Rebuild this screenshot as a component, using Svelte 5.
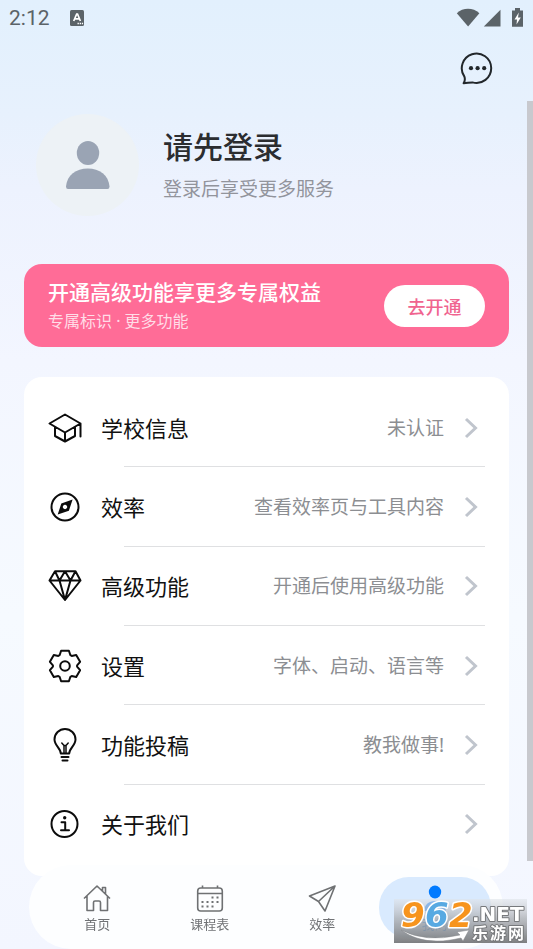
<script>
  const rows = [
    { icon: 'school', label: '学校信息', value: '未认证' },
    { icon: 'compass', label: '效率', value: '查看效率页与工具内容' },
    { icon: 'diamond', label: '高级功能', value: '开通后使用高级功能' },
    { icon: 'gear', label: '设置', value: '字体、启动、语言等' },
    { icon: 'bulb', label: '功能投稿', value: '教我做事!' },
    { icon: 'info', label: '关于我们', value: '' }
  ];

  const tabs = [
    { icon: 'home', label: '首页', active: false },
    { icon: 'calendar', label: '课程表', active: false },
    { icon: 'plane', label: '效率', active: false },
    { icon: 'me', label: '我的', active: true }
  ];

  // Outline of the settings gear: one tooth, turned six times round the centre.
  const tooth = [[-5.4, -10.8], [-3.9, -15.2], [3.9, -15.2], [5.4, -10.8]];
  const gear = Array.from({ length: 6 }, (_, i) => {
    const a = (i * Math.PI) / 3;
    return tooth
      .map(([x, y]) => {
        const px = 17 + x * Math.cos(a) - y * Math.sin(a);
        const py = 17 + x * Math.sin(a) + y * Math.cos(a);
        return `${px.toFixed(1)},${py.toFixed(1)}`;
      })
      .join(' ');
  }).join(' ');
</script>

<div class="page">
  <div class="status">
    <span class="clock">2:12</span>
    <svg class="ime" width="14" height="16" viewBox="0 0 14 16" aria-hidden="true">
      <rect width="14" height="16" rx="1.5" fill="#5b6368" />
      <path d="M3.7 11 L6.7 4 H7.5 L10.4 11 M4.8 8.8 H9.4" fill="none" stroke="#fff" stroke-width="1.7" />
      <path d="M7.5 13.5 h1.4 M9.7 13.5 h1.4 M11.9 13.5 h1.2" stroke="#fff" stroke-width="1.3" />
    </svg>
    <svg class="signals" width="68" height="20" viewBox="0 0 68 20" aria-hidden="true">
      <g fill="#5b6368">
        <path d="M0.8 5.2 C7 -0.6 17 -0.6 23.4 5.2 L12.1 18.6 Z" />
        <path d="M44.5 1.8 V18.6 H27.8 Z" />
        <path d="M56 2.5 h3 V0 h5 v2.5 h3 V18.8 H56 Z" />
      </g>
      <path d="M62.8 4.5 L58.5 11.5 H61 L60.5 16.5 L64.8 9.5 H62 Z" fill="#fff" />
    </svg>
  </div>

  <header class="toolbar">
    <button class="chat" aria-label="消息">
      <svg width="34" height="34" viewBox="0 0 34 34" aria-hidden="true">
        <path
          d="M3.6 31.3 Q5.6 28 4.4 24.6 A14.7 14.7 0 1 1 12.5 30.4 Q8 30.4 3.6 31.3 Z"
          fill="none" stroke="#22272b" stroke-width="2" stroke-linejoin="round"
        />
        <g fill="#22272b">
          <circle cx="11" cy="16.2" r="2.1" /><circle cx="17.6" cy="16.2" r="2.1" /><circle cx="24.2" cy="16.2" r="2.1" />
        </g>
      </svg>
    </button>
  </header>

  <section class="profile">
    <div class="avatar">
      <svg width="44" height="48" viewBox="0 0 44 48" aria-hidden="true">
        <g fill="#9aa4b4">
          <ellipse cx="22" cy="12" rx="11.2" ry="12" />
          <path d="M2 48 Q0 48 0 45.5 C1 34 10 27.5 21.8 27.5 S42.5 34 43.5 45.5 Q43.5 48 41.5 48 Z" />
        </g>
      </svg>
    </div>
    <div class="who">
      <h1>请先登录</h1>
      <p>登录后享受更多服务</p>
    </div>
  </section>

  <section class="banner">
    <div class="pitch">
      <h2>开通高级功能享更多专属权益</h2>
      <p>专属标识 · 更多功能</p>
    </div>
    <button class="open">去开通</button>
  </section>

  <ul class="card">
    {#each rows as row}
      <li>
        <a href="#{row.icon}">
          <svg class="icon" width="34" height="34" viewBox="0 0 34 34" aria-hidden="true">
            {#if row.icon === 'school'}
              <path d="M17 3.5 L32.5 12.5 L17 21.5 L1.5 12.5 Z M7 16 V25 L17 30.5 L27 25 V16 M17 21.5 V30 M32.5 12.5 V25.5" />
            {:else if row.icon === 'compass'}
              <circle cx="17" cy="17" r="13.5" />
              <path
                class="solid" fill-rule="evenodd"
                d="M24.6 9.6 L20.9 20.7 L9.7 24.6 L13.3 13.5 Z M17 14.8 a2.2 2.2 0 1 0 0.01 0 Z"
              />
            {:else if row.icon === 'diamond'}
              <path d="M7 2.3 H27.5 L32.5 11.5 L17 31 L1.5 11.5 Z M1.5 11.5 H32.5 M7 2.3 L11.5 11.5 L17 2.3 L22.5 11.5 L27.5 2.3 M11.5 11.5 L17 31 L22.5 11.5" />
            {:else if row.icon === 'gear'}
              <polygon points={gear} />
              <circle cx="17" cy="17" r="4.8" />
            {:else if row.icon === 'bulb'}
              <path d="M12.8 25.5 C12.8 20.5 6.5 17.5 6.5 11.5 A10.5 10.5 0 0 1 27.5 11.5 C27.5 17.5 21.2 20.5 21.2 25.5 Z" />
              <path d="M13.5 29 H20.5 M14.5 32.5 H19.5" />
              <path class="thin" d="M13.8 15 L16 17.5 V25 M20.2 15 L18 17.5 V25 M16 17.5 H18" />
            {:else}
              <circle cx="16.5" cy="17" r="13" />
              <path d="M13.5 15.3 H17.2 V23 M13 23.2 H21" />
              <circle class="solid" cx="16.7" cy="10.7" r="1.7" />
            {/if}
          </svg>
          <span class="label">{row.label}</span>
          <span class="value">{row.value}</span>
          <svg class="chevron" width="14" height="22" viewBox="0 0 14 22" aria-hidden="true">
            <path d="M2 2 L11.5 11 L2 20" />
          </svg>
        </a>
      </li>
    {/each}
  </ul>

  <div class="scrollbar"></div>

  <nav class="tabs">
    {#each tabs as tab}
      <a href="#{tab.icon}" class:active={tab.active}>
        <svg width="28" height="28" viewBox="0 0 28 28" aria-hidden="true">
          {#if tab.icon === 'home'}
            <path d="M1 14.500 L14 2 L27 14.500 M4 12 V26.500 H10.500 V18.500 Q10.500 17 12 17 H16 Q17.500 17 17.500 18.500 V26.500 H24.500 V12 M19.500 7 V3.500 H22.500 V10" />
          {:else if tab.icon === 'calendar'}
            <rect x="1.7" y="4" width="24.6" height="23" rx="3" />
            <path d="M1.7 9.500 H26.300 M6.500 1.500 V4 M21.500 1.500 V4" />
            <path class="dots" d="M15.500 13.500 h2 M20.500 13.500 h2 M5.500 18 h2 M10.500 18 h2 M15.500 18 h2 M20.500 18 h2 M5.500 22.500 h2 M10.500 22.500 h2 M15.500 22.500 h2" />
          {:else if tab.icon === 'plane'}
            <path d="M27 2 L1.500 12 L10.500 17.500 L17 27 Z M27 2 L10.500 17.500" />
          {:else}
            <ellipse class="fill" cx="14" cy="8" rx="6.2" ry="6.5" />
            <path class="fill" d="M3 27 C3.5 20.5 8 17 14 17 S24.5 20.5 25 27 Z" />
          {/if}
        </svg>
        <span>{tab.label}</span>
      </a>
    {/each}
  </nav>

  <div class="mark">
    <svg width="133" height="44" viewBox="0 0 133 44">
      <defs>
        <linearGradient id="shade" x1="0" y1="0" x2="0" y2="1">
          <stop offset="0" stop-color="#dfe3e9" stop-opacity="0.6" />
          <stop offset="0.5" stop-color="#a9acb1" stop-opacity="0.85" />
          <stop offset="1" stop-color="#77797c" stop-opacity="0.95" />
        </linearGradient>
      </defs>
      <rect width="133" height="44" fill="url(#shade)" />
      <path d="M7 31 Q32 44 66 36 L63 33 L75 31 L69 42 L67 39 Q30 48 7 31 Z" fill="#fff" stroke="#85878a" stroke-width="0.5" />
      <g class="digits">
        <text x="7" y="28" fill="#f7941d">9</text>
        <text x="31" y="28" fill="#57a9e2">6</text>
        <text x="55" y="28" fill="#f7941d">2</text>
      </g>
      <text class="net" x="78" y="22">.NET</text>
      <text class="site" x="78" y="40">乐</text>
      <text class="site" x="96" y="40">游</text>
      <text class="site" x="114" y="40">网</text>
    </svg>
  </div>
</div>

<style>
  :global(body) {
    margin: 0;
  }

  .page {
    position: relative;
    box-sizing: border-box;
    display: flex;
    flex-direction: column;
    min-height: 100vh;
    padding-bottom: 73px;
    background: linear-gradient(180deg, #e2f0fd 0%, #e7f1fd 12%, #edf2fe 20%, #f3f6ff 38%, #f6faff 65%, #f3f6ff 100%);
    font-family: 'Noto Sans', 'Noto Sans CJK SC', sans-serif;
  }

  h1, h2, p, ul {
    margin: 0;
    padding: 0;
  }

  button {
    border: 0;
    padding: 0;
    font-family: inherit;
    cursor: pointer;
  }

  a {
    color: inherit;
    text-decoration: none;
  }

  svg {
    display: block;
    flex: none;
  }

  .status {
    display: flex;
    align-items: center;
    height: 36px;
    padding: 0 9px;
  }

  .clock {
    font: 400 21px/24px Roboto, sans-serif;
    color: #5b6368;
  }

  .ime {
    margin-left: 20px;
  }

  .signals {
    margin-left: auto;
  }

  .toolbar {
    display: flex;
    justify-content: flex-end;
    padding: 16px 39px 0;
  }

  .chat {
    background: none;
  }

  .profile {
    display: flex;
    align-items: center;
    gap: 24px;
    margin-top: 28px;
    padding: 0 36px;
  }

  .avatar {
    display: flex;
    align-items: center;
    justify-content: center;
    width: 103px;
    height: 102px;
    border-radius: 50%;
    background: #edf2f6;
  }

  h1 {
    font-size: 30px;
    line-height: 40px;
    font-weight: 500;
    color: #2b2d30;
  }

  .who p {
    margin-top: 8px;
    font-size: 19px;
    line-height: 28px;
    color: #92949c;
  }

  .banner {
    display: flex;
    align-items: center;
    justify-content: space-between;
    height: 83px;
    margin: 48px 24px 0;
    padding: 0 24px;
    border-radius: 18px;
    background: #ff6c97;
    color: #fff;
  }

  h2 {
    font-size: 21px;
    line-height: 30px;
    font-weight: 500;
  }

  .banner p {
    font-size: 16px;
    line-height: 28px;
    color: #ffdde7;
  }

  .open {
    width: 101px;
    height: 42px;
    border-radius: 21px;
    background: #fff;
    color: #f0648f;
    font-size: 18px;
    font-weight: 500;
  }

  .card {
    flex: 1;
    display: flex;
    flex-direction: column;
    margin: 30px 24px 0;
    padding: 11px 0 12px;
    border-radius: 18px;
    background: #fff;
    list-style: none;
  }

  li {
    position: relative;
    flex: 1;
    display: flex;
    min-height: 60px;
  }

  li:not(:last-child)::after {
    content: '';
    position: absolute;
    left: 100px;
    right: 24px;
    bottom: 0;
    height: 1px;
    background: #dfe0e2;
  }

  li a {
    flex: 1;
    display: flex;
    align-items: center;
    padding: 0 31px 0 24px;
  }

  .icon {
    fill: none;
    stroke: #0c0c0c;
    stroke-width: 2;
    stroke-linejoin: round;
    stroke-linecap: round;
  }

  .icon .solid {
    fill: #0c0c0c;
    stroke: none;
  }

  .icon .thin {
    stroke-width: 1.5;
  }

  .label {
    margin-left: 19px;
    font-size: 22px;
    line-height: 32px;
    color: #111;
  }

  .value {
    margin-left: auto;
    margin-right: 20px;
    font-size: 19px;
    line-height: 28px;
    color: #8c8e92;
  }

  .chevron path {
    fill: none;
    stroke: #c0c5cd;
    stroke-width: 3;
  }

  .scrollbar {
    position: absolute;
    top: 101px;
    right: 0;
    bottom: 88px;
    width: 6px;
    background: #c8c9ce;
  }

  .tabs {
    position: fixed;
    left: 29px;
    right: 30px;
    bottom: 0;
    box-sizing: border-box;
    display: flex;
    height: 84px;
    padding: 12px 12px 11px;
    border-radius: 42px;
    background: #fdfeff;
    color: #707275;
  }

  .tabs a {
    flex: 1;
    display: flex;
    flex-direction: column;
    align-items: center;
    padding-top: 7px;
    border-radius: 30px;
    font-size: 13px;
    line-height: 18px;
  }

  .tabs span {
    margin-top: 3px;
  }

  .tabs svg {
    fill: none;
    stroke: #6f7173;
    stroke-width: 1.6;
    stroke-linejoin: round;
  }

  .tabs .dots {
    stroke-width: 2;
  }

  .tabs .fill {
    fill: #007aff;
    stroke: none;
  }

  .tabs .active {
    background: #d9eafe;
    color: #007aff;
  }

  .mark {
    position: fixed;
    right: 6px;
    bottom: 6px;
  }

  .mark svg {
    overflow: visible;
  }

  .digits {
    font: italic 700 34px 'DejaVu Sans', sans-serif;
    stroke: #fff;
    stroke-width: 3;
    stroke-linejoin: round;
    paint-order: stroke;
  }

  .net {
    font: 700 20px 'DejaVu Sans', sans-serif;
  }

  .site {
    font: 700 16px 'Noto Sans CJK SC', sans-serif;
  }

  .net,
  .site {
    fill: #fff;
    stroke: #77797c;
    stroke-width: 2;
    stroke-linejoin: round;
    paint-order: stroke;
  }
</style>
